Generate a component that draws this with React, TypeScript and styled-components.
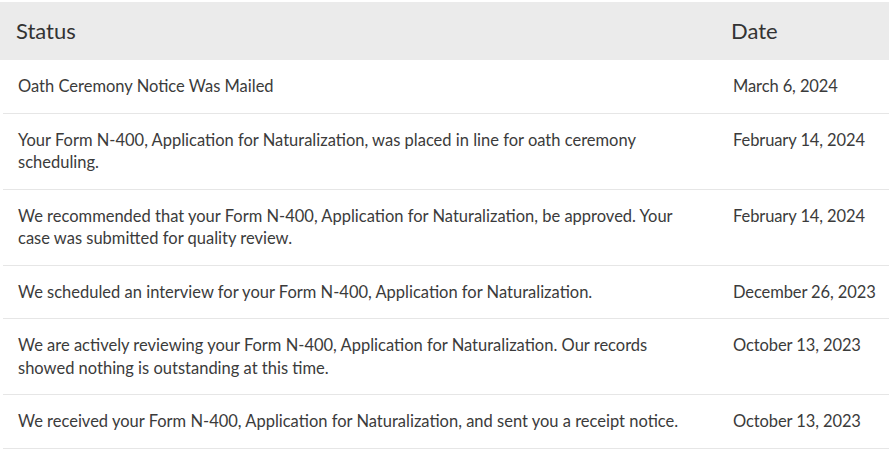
import React from 'react';
import styled, { createGlobalStyle } from 'styled-components';

type CaseEvent = {
  status: string;
  date: string;
};

const events: CaseEvent[] = [
  { status: 'Oath Ceremony Notice Was Mailed', date: 'March 6, 2024' },
  {
    status:
      'Your Form N-400, Application for Naturalization, was placed in line for oath ceremony scheduling.',
    date: 'February 14, 2024',
  },
  {
    status:
      'We recommended that your Form N-400, Application for Naturalization, be approved. Your case was submitted for quality review.',
    date: 'February 14, 2024',
  },
  {
    status: 'We scheduled an interview for your Form N-400, Application for Naturalization.',
    date: 'December 26, 2023',
  },
  {
    status:
      'We are actively reviewing your Form N-400, Application for Naturalization. Our records showed nothing is outstanding at this time.',
    date: 'October 13, 2023',
  },
  {
    status:
      'We received your Form N-400, Application for Naturalization, and sent you a receipt notice.',
    date: 'October 13, 2023',
  },
];

const GlobalStyle = createGlobalStyle`
  body {
    margin: 0;
    background: #fff;
    font-family: Lato, 'Liberation Sans', sans-serif;
    color: #333;
  }
`;

const Wrapper = styled.div`
  padding-top: 2px;
`;

const HeaderRow = styled.div`
  display: grid;
  grid-template-columns: 715px 1fr;
  align-items: center;
  height: 58px;
  background-color: #ebebeb;
`;

const HeaderCell = styled.div`
  padding: 0 0 1px 16px;
  font-size: 22px;
  color: #333;
`;

const Rows = styled.ul`
  margin: 0 0 0 3px;
  padding: 0;
  list-style: none;
`;

const Row = styled.li`
  display: grid;
  grid-template-columns: 712px 1fr;
  border-bottom: 1px solid #e6e6e6;
`;

const StatusCell = styled.div`
  padding: 15px 27px 15px 15px;
  font-size: 16.5px;
  line-height: 22.5px;
  color: #3b3b3b;
`;

const DateCell = styled(StatusCell)`
  padding: 15px 0 15px 18px;
  letter-spacing: -0.1px;
  white-space: nowrap;
`;

export default function App() {
  return (
    <Wrapper>
      <GlobalStyle />
      <HeaderRow>
        <HeaderCell>Status</HeaderCell>
        <HeaderCell>Date</HeaderCell>
      </HeaderRow>
      <Rows>
        {events.map((e, i) => (
          <Row key={i}>
            <StatusCell>{e.status}</StatusCell>
            <DateCell>{e.date}</DateCell>
          </Row>
        ))}
      </Rows>
    </Wrapper>
  );
}
